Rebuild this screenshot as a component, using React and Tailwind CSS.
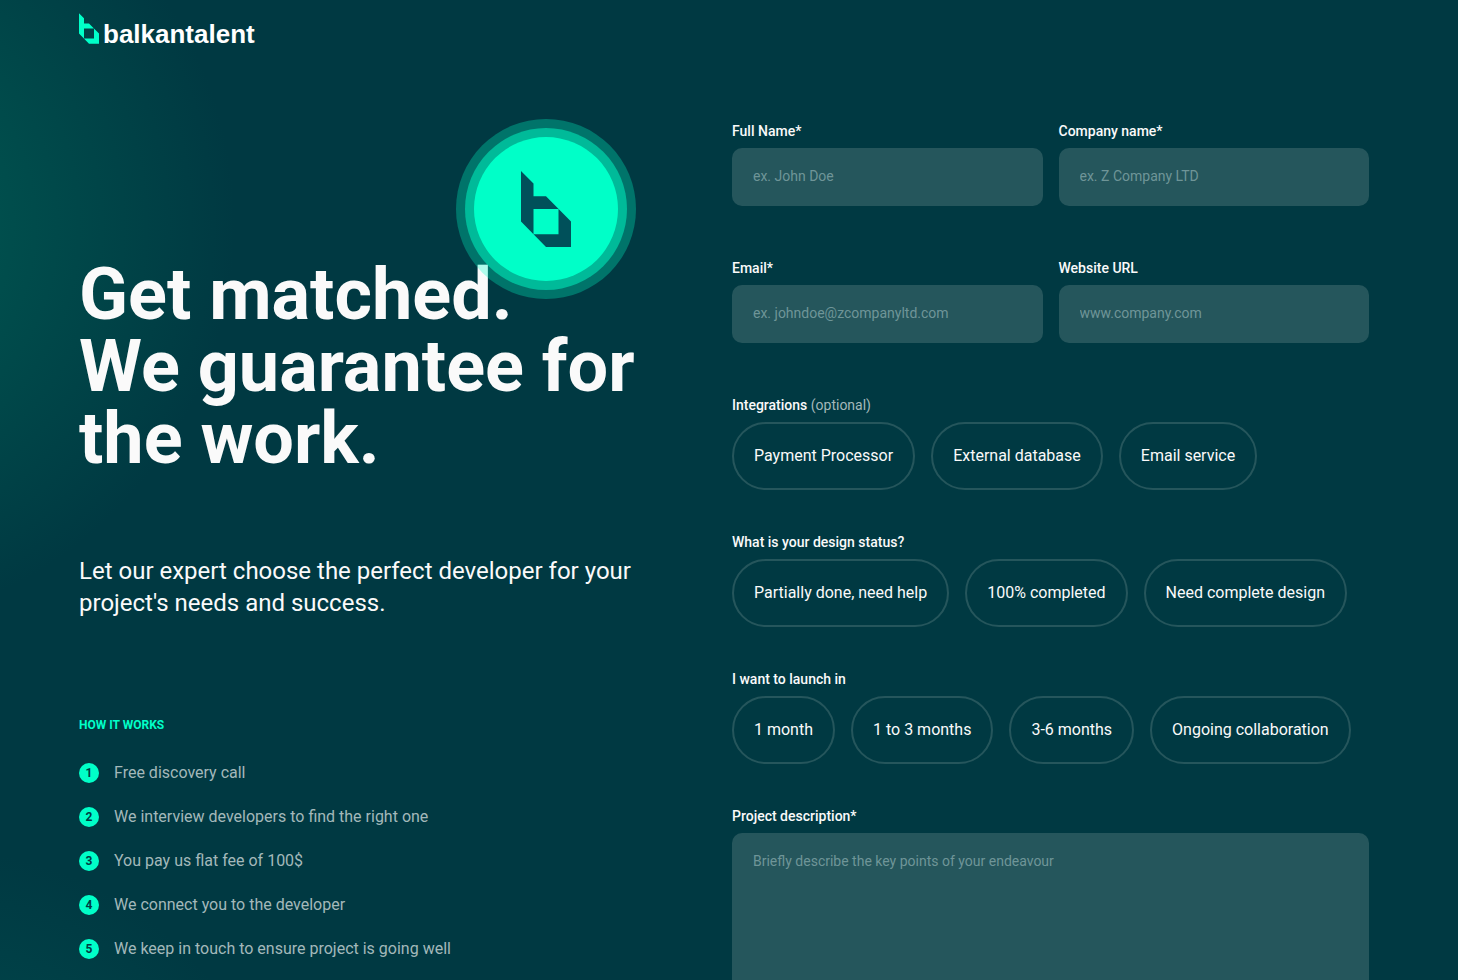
import React, { useState } from "react";

const steps = [
  "Free discovery call",
  "We interview developers to find the right one",
  "You pay us flat fee of 100$",
  "We connect you to the developer",
  "We keep in touch to ensure project is going well",
];

const integrations = ["Payment Processor", "External database", "Email service"];

const designStatuses = [
  "Partially done, need help",
  "100% completed",
  "Need complete design",
];

const launchOptions = [
  "1 month",
  "1 to 3 months",
  "3-6 months",
  "Ongoing collaboration",
];

const LogoMark = ({ className }) => (
  <svg viewBox="0 0 50 76" className={className} aria-hidden="true">
    <path
      fill="currentColor"
      fillRule="evenodd"
      d="M0 0 L12.5 12.5 V25.3 H25 L50 50.6 V76 H25 L0 50.6 Z M12.5 38 V63.3 H37.5 V38 Z"
    />
  </svg>
);

const Badge = () => (
  <div className="absolute right-0 top-0 rounded-full bg-[#00ffc8]/30 p-[9px]">
    <div className="rounded-full bg-[#00ffc8]/50 p-[9px]">
      <div className="flex size-36 items-center justify-center rounded-full bg-[#00ffc8]">
        <LogoMark className="h-[76px] w-[50px] text-[#00505a]" />
      </div>
    </div>
  </div>
);

const TextField = ({ id, label, type = "text", placeholder }) => (
  <div className="flex min-h-[137px] min-w-0 flex-col items-start gap-[7px]">
    <label htmlFor={id} className="text-sm font-medium">
      {label}
    </label>
    <input
      id={id}
      name={id}
      type={type}
      placeholder={placeholder}
      className="h-[58px] w-full rounded-[10px] bg-[#25565c] px-[21px] pb-[2px] text-sm outline-none placeholder:text-[#6f9598] focus:ring-1 focus:ring-[#00ffc8]"
    />
  </div>
);

const ChipGroup = ({ legend, hint, name, type, options, isChecked, onPick }) => (
  <fieldset className="min-h-[137px]">
    <legend className="mb-[7px] text-sm font-medium">
      {legend}
      {hint && <span className="font-normal text-[#a3b8ba]"> {hint}</span>}
    </legend>
    <div className="flex flex-wrap gap-4">
      {options.map((option) => (
        <label
          key={option}
          className="flex h-[68px] cursor-pointer items-center rounded-full border-2 border-[#25565c] px-5 has-checked:border-[#00ffc8]"
        >
          <input
            type={type}
            name={name}
            value={option}
            checked={isChecked(option)}
            onChange={() => onPick(option)}
            className="sr-only"
          />
          {option}
        </label>
      ))}
    </div>
  </fieldset>
);

const App = () => {
  const [picked, setPicked] = useState([]);
  const [design, setDesign] = useState("");
  const [launch, setLaunch] = useState("");

  const toggleIntegration = (option) =>
    setPicked((prev) =>
      prev.includes(option)
        ? prev.filter((p) => p !== option)
        : [...prev, option]
    );

  return (
    <div className="h-screen overflow-x-hidden overflow-y-auto bg-[#003942] bg-[radial-gradient(circle_at_-170px_225px,#004f4d_160px,transparent_405px),radial-gradient(circle_at_-60px_1200px,#00454a_160px,transparent_350px)] font-['Roboto',sans-serif] text-[#fafafa]">
      <div className="mx-auto max-w-[1300px]">
        <header className="flex h-[57px] items-end pb-[13px]">
          <a href="#" className="flex items-end gap-1">
            <LogoMark className="h-[31px] w-5 text-[#00ffc8]" />
            <span className="font-['Liberation_Sans',sans-serif] text-[26px] leading-5 font-bold text-white">
              balkantalent
            </span>
          </a>
        </header>

        <main className="grid grid-cols-[557px_1fr] gap-24 pt-[62px]">
          <section className="relative pt-[140px]">
            <h1 className="text-7xl leading-none font-bold whitespace-pre-line">
              {"Get matched.\nWe guarantee for the work."}
            </h1>
            <Badge />
            <p className="mt-20 text-2xl">
              Let our expert choose the perfect developer for your project's
              needs and success.
            </p>
            <h2 className="mt-[98px] text-xs font-bold text-[#00ffc8]">
              HOW IT WORKS
            </h2>
            <ol className="mt-7 flex flex-col gap-5">
              {steps.map((step, i) => (
                <li key={step} className="flex items-center gap-[15px]">
                  <span className="flex size-5 items-center justify-center rounded-full bg-[#00ffc8] text-xs font-bold text-[#003942]">
                    {i + 1}
                  </span>
                  <span className="text-[#a3b8ba]">{step}</span>
                </li>
              ))}
            </ol>
          </section>

          <form
            className="min-w-0 pt-[2px] pr-[10px]"
            onSubmit={(e) => e.preventDefault()}
          >
            <div className="grid grid-cols-2 gap-x-4">
              <TextField id="name" label="Full Name*" placeholder="ex. John Doe" />
              <TextField
                id="company"
                label="Company name*"
                placeholder="ex. Z Company LTD"
              />
              <TextField
                id="email"
                type="email"
                label="Email*"
                placeholder="ex. johndoe@zcompanyltd.com"
              />
              <TextField
                id="website"
                type="url"
                label="Website URL"
                placeholder="www.company.com"
              />
            </div>

            <ChipGroup
              legend="Integrations"
              hint="(optional)"
              name="integrations"
              type="checkbox"
              options={integrations}
              isChecked={(option) => picked.includes(option)}
              onPick={toggleIntegration}
            />
            <ChipGroup
              legend="What is your design status?"
              name="design"
              type="radio"
              options={designStatuses}
              isChecked={(option) => option === design}
              onPick={setDesign}
            />
            <ChipGroup
              legend="I want to launch in"
              name="launch"
              type="radio"
              options={launchOptions}
              isChecked={(option) => option === launch}
              onPick={setLaunch}
            />

            <div className="flex flex-col items-start gap-[7px]">
              <label htmlFor="description" className="text-sm font-medium">
                Project description*
              </label>
              <textarea
                id="description"
                name="description"
                placeholder="Briefly describe the key points of your endeavour"
                className="h-[200px] w-full resize-none rounded-[10px] bg-[#25565c] px-[21px] py-[18px] text-sm outline-none placeholder:text-[#6f9598] focus:ring-1 focus:ring-[#00ffc8]"
              />
            </div>
          </form>
        </main>
      </div>
    </div>
  );
};

export default App;
